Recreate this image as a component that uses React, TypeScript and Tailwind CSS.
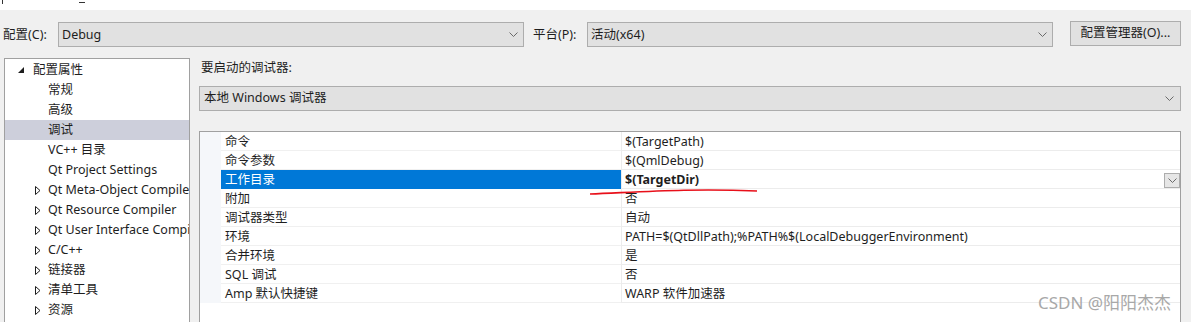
const Chevron = () => (
  <svg width="9" height="6" viewBox="0 0 9 6" className="shrink-0">
    <path d="M0.5 0.5 L4.5 4.5 L8.5 0.5" fill="none" stroke="#6a6a6a" strokeWidth="1" />
  </svg>
);

const ExpandedArrow = () => (
  <svg width="7" height="7" viewBox="0 0 7 7">
    <polygon points="6,0 6,6 0,6" fill="#1e1e1e" />
  </svg>
);

const CollapsedArrow = () => (
  <svg width="6" height="9" viewBox="0 0 6 9">
    <polygon points="0.5,0.5 5,4.5 0.5,8.5" fill="none" stroke="#1e1e1e" strokeWidth="1" />
  </svg>
);

const treeItems = [
  { label: "常规" },
  { label: "高级" },
  { label: "调试", selected: true },
  { label: "VC++ 目录" },
  { label: "Qt Project Settings" },
  { label: "Qt Meta-Object Compiler", expandable: true },
  { label: "Qt Resource Compiler", expandable: true },
  { label: "Qt User Interface Compiler", expandable: true },
  { label: "C/C++", expandable: true },
  { label: "链接器", expandable: true },
  { label: "清单工具", expandable: true },
  { label: "资源", expandable: true },
];

const props = [
  { name: "命令", value: "$(TargetPath)" },
  { name: "命令参数", value: "$(QmlDebug)" },
  { name: "工作目录", value: "$(TargetDir)", selected: true },
  { name: "附加", value: "否" },
  { name: "调试器类型", value: "自动" },
  { name: "环境", value: "PATH=$(QtDllPath);%PATH%$(LocalDebuggerEnvironment)" },
  { name: "合并环境", value: "是" },
  { name: "SQL 调试", value: "否" },
  { name: "Amp 默认快捷键", value: "WARP 软件加速器" },
];

const App = () => {
  return (
    <div
      className="relative w-[1191px] h-[322px] overflow-hidden bg-[#f0f0f0] text-[12.5px] text-[#1e1e1e]"
      style={{ fontFamily: '"Noto Sans", "Noto Sans CJK SC", sans-serif' }}
    >
      {/* top strip */}
      <div className="flex items-start h-[10px] bg-white">
        <span className="ml-[2px] w-px h-[4px] bg-[#333]" />
        <span className="ml-[76px] mt-[2px] w-[6px] h-px bg-[#333]" />
      </div>

      {/* config row */}
      <div className="flex items-start mt-[11px] h-[25px]">
        <span className="w-[58px] pl-[3px] mt-[5px] leading-[18px] whitespace-nowrap">配置(C):</span>
        <div className="mt-px w-[466px] h-[25px] flex items-center justify-between border border-[#adadad] bg-[#e1e1e1] pl-[3px] pr-[5px] pt-px">
          <span>Debug</span>
          <Chevron />
        </div>
        <span className="ml-[9px] w-[54px] mt-[5px] leading-[18px] whitespace-nowrap">平台(P):</span>
        <div className="mt-px w-[466px] h-[25px] flex items-center justify-between border border-[#adadad] bg-[#e1e1e1] pl-[3px] pr-[5px] pt-px">
          <span>活动(x64)</span>
          <Chevron />
        </div>
        <button className="ml-[17px] w-[111px] h-[25px] border border-[#adadad] bg-[#e1e1e1] flex items-center justify-center whitespace-nowrap">
          配置管理器(O)...
        </button>
      </div>

      {/* main area */}
      <div className="flex mt-[12px]">
        {/* tree */}
        <div className="ml-[4px] w-[186px] h-[300px] border border-[#a0a0a0] bg-white pt-px overflow-hidden">
          <div className="flex items-center h-[20px]">
            <span className="ml-[13px] w-[15px] shrink-0 flex">
              <ExpandedArrow />
            </span>
            <span className="whitespace-nowrap">配置属性</span>
          </div>
          {treeItems.map((item) => (
            <div
              key={item.label}
              className={`flex items-center h-[20px] whitespace-nowrap ${item.selected ? "bg-[#cdcfdb]" : ""}`}
            >
              <span className="ml-[30px] w-[13px] shrink-0 flex">{item.expandable && <CollapsedArrow />}</span>
              <span>{item.label}</span>
            </div>
          ))}
        </div>

        {/* right pane */}
        <div className="ml-[9px] w-[982px] flex flex-col">
          <div className="h-[20px] flex items-center pl-[2px]">要启动的调试器:</div>
          <div className="mt-[8px] h-[25px] flex items-center justify-between border border-[#adadad] bg-[#e1e1e1] pl-[4px] pr-[6px]">
            <span>本地 Windows 调试器</span>
            <Chevron />
          </div>

          {/* property grid */}
          <div className="mt-[20px] h-[200px] border border-[#a0a0a0] bg-white">
            {props.map((p) => (
              <div key={p.name} className="flex h-[19px]">
                <div className="w-[21px] bg-[#f5f7fa]" />
                <div
                  className={`w-[400px] pl-[4px] pt-[2px] flex items-center border-b ${
                    p.selected ? "bg-[#0078d7] text-white border-[#0078d7]" : "border-[#f0f0f0]"
                  }`}
                >
                  {p.name}
                </div>
                <div className="flex-1 flex items-center justify-between border-l border-b border-[#ececec] pl-[3px]">
                  <span className={`whitespace-nowrap pt-[2px] ${p.selected ? "font-bold" : ""}`}>{p.value}</span>
                  {p.selected && (
                    <span className="w-[16px] h-[15px] mt-[3px] border border-[#adadad] bg-[#e6e6e6] flex items-center justify-center">
                      <Chevron />
                    </span>
                  )}
                </div>
              </div>
            ))}
          </div>
        </div>
      </div>

      {/* hand-drawn red underline */}
      <svg className="absolute left-0 top-0 pointer-events-none" width="1191" height="322">
        <path d="M590 194 C 640 192, 690 188, 757 191" fill="none" stroke="#e8101a" strokeWidth="1.6" />
      </svg>

      {/* watermark */}
      <span className="absolute left-[1038px] top-[290px] text-[17px] text-[#a8a8a8] whitespace-nowrap">
        CSDN @阳阳杰杰
      </span>
    </div>
  );
};

export default App;
